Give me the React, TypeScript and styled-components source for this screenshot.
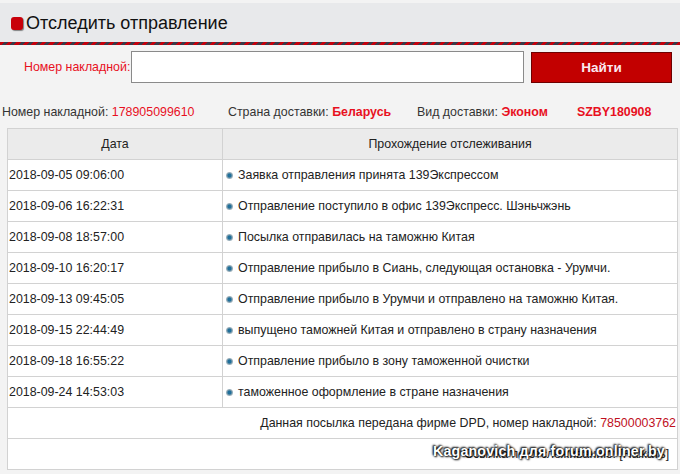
import React from 'react';
import styled, { createGlobalStyle } from 'styled-components';

const GlobalStyle = createGlobalStyle`
  html, body {
    margin: 0;
    padding: 0;
    background: #f3f3f3;
    font-family: 'Liberation Sans', Arial, sans-serif;
    font-size: 12.4px;
    color: #222;
  }
`;

const Page = styled.div`
  position: relative;
  width: 680px;
  height: 474px;
  overflow: hidden;
  padding-top: 3px;
  box-sizing: border-box;
`;

const TitleBar = styled.div`
  height: 39px;
  background: #e8e9eb;
  display: flex;
  align-items: center;
  padding-left: 11px;
  gap: 3px;
`;

const Marker = styled.span`
  width: 12px;
  height: 13px;
  border-radius: 3px;
  background: #c8000a;
  box-shadow: 1px 1px 1px rgba(0, 0, 0, 0.45);
  margin-top: 1px;
`;

const Title = styled.h1`
  margin: 0;
  font-size: 18px;
  font-weight: normal;
  color: #111;
  line-height: 1;
`;

const Stripe = styled.div`
  height: 3px;
  background: repeating-linear-gradient(
    135deg,
    #c4000c 0 3px,
    #3c3a48 3px 6px
  );
`;

const SearchRow = styled.form`
  display: flex;
  align-items: center;
  padding: 6px 0 0 24px;
  height: 32px;
`;

const Label = styled.label`
  color: #e8101e;
  font-size: 12.4px;
  width: 107px;
  white-space: nowrap;
`;

const Input = styled.input`
  width: 393px;
  height: 32px;
  box-sizing: border-box;
  border: 1px solid #8a8a8a;
  background: #fff;
  outline: none;
`;

const Button = styled.button`
  margin-left: 7px;
  width: 141px;
  height: 31px;
  background: #c20000;
  border: 1px solid #6e0000;
  color: #fbe8f0;
  font-family: 'Liberation Sans', Arial, sans-serif;
  font-size: 13.5px;
  font-weight: bold;
  cursor: pointer;
`;

const InfoRow = styled.div`
  display: grid;
  grid-template-columns: 226px 189px 160px auto;
  padding: 20px 0 0 2px;
  height: 18px;
  align-items: center;
  color: #333;
`;

const Value = styled.span<{ $bold?: boolean }>`
  color: #e8101e;
  font-weight: ${({ $bold }) => ($bold ? 'bold' : 'normal')};
`;

const Table = styled.table`
  margin: 7px 0 0 7px;
  width: 671px;
  border-collapse: collapse;
  background: #fff;
  table-layout: fixed;

  td, th {
    border: 1px solid #d2d2d2;
    height: 30px;
    padding: 0 1px;
    font-size: 12.4px;
    font-weight: normal;
  }
`;

const HeadCell = styled.th`
  background: #ebebeb;
  color: #222;
  text-align: center;
`;

const Cell = styled.td<{ $right?: boolean }>`
  text-align: ${({ $right }) => ($right ? 'right' : 'left')};
  white-space: nowrap;
`;

const Bullet = styled.span`
  display: inline-block;
  width: 7px;
  height: 7px;
  border-radius: 50%;
  margin: 0 5px 1px 2px;
  background: radial-gradient(circle at 50% 50%, #1f6f9a 0 30%, #8aa4b2 55%, #dfe3e6 100%);
  vertical-align: middle;
`;

const DarkRed = styled.span`
  color: #c0101e;
`;

const Watermark = styled.div`
  position: absolute;
  left: 433px;
  top: 443px;
  color: #fff;
  font-weight: bold;
  font-size: 14.2px;
  text-shadow: 0 0 2px #000, 1px 1px 2px #000, -1px -1px 2px #000;
  letter-spacing: 0.2px;
`;

const events: [string, string][] = [
  ['2018-09-05 09:06:00', 'Заявка отправления принята 139Экспрессом'],
  ['2018-09-06 16:22:31', 'Отправление поступило в офис 139Экспресс. Шэньчжэнь'],
  ['2018-09-08 18:57:00', 'Посылка отправилась на таможню Китая'],
  ['2018-09-10 16:20:17', 'Отправление прибыло в Сиань, следующая остановка - Урумчи.'],
  ['2018-09-13 09:45:05', 'Отправление прибыло в Урумчи и отправлено на таможню Китая.'],
  ['2018-09-15 22:44:49', 'выпущено таможней Китая и отправлено в страну назначения'],
  ['2018-09-18 16:55:22', 'Отправление прибыло в зону таможенной очистки'],
  ['2018-09-24 14:53:03', 'таможенное оформление в стране назначения'],
];

const App: React.FC = () => {
  return (
    <Page>
      <GlobalStyle />
      <TitleBar>
        <Marker />
        <Title>Отследить отправление</Title>
      </TitleBar>
      <Stripe />
      <SearchRow onSubmit={(e) => e.preventDefault()}>
        <Label>Номер накладной:</Label>
        <Input type="text" />
        <Button type="submit">Найти</Button>
      </SearchRow>
      <InfoRow>
        <span>Номер накладной: <Value>178905099610</Value></span>
        <span>Страна доставки: <Value $bold>Беларусь</Value></span>
        <span>Вид доставки: <Value $bold>Эконом</Value></span>
        <span><Value $bold>SZBY180908</Value></span>
      </InfoRow>
      <Table>
        <colgroup>
          <col style={{ width: 215 }} />
          <col />
        </colgroup>
        <thead>
          <tr>
            <HeadCell>Дата</HeadCell>
            <HeadCell>Прохождение отслеживания</HeadCell>
          </tr>
        </thead>
        <tbody>
          {events.map(([date, text]) => (
            <tr key={date}>
              <Cell>{date}</Cell>
              <Cell><Bullet />{text}</Cell>
            </tr>
          ))}
          <tr>
            <Cell $right colSpan={2}>
              Данная посылка передана фирме DPD, номер накладной: <DarkRed>78500003762</DarkRed>
            </Cell>
          </tr>
          <tr>
            <Cell $right colSpan={2}>
              Ссылка по отслеживанию: [Нажать]&nbsp;&nbsp;
            </Cell>
          </tr>
        </tbody>
      </Table>
      <Watermark>Kaganovich для forum.onliner.by</Watermark>
    </Page>
  );
};

export default App;
